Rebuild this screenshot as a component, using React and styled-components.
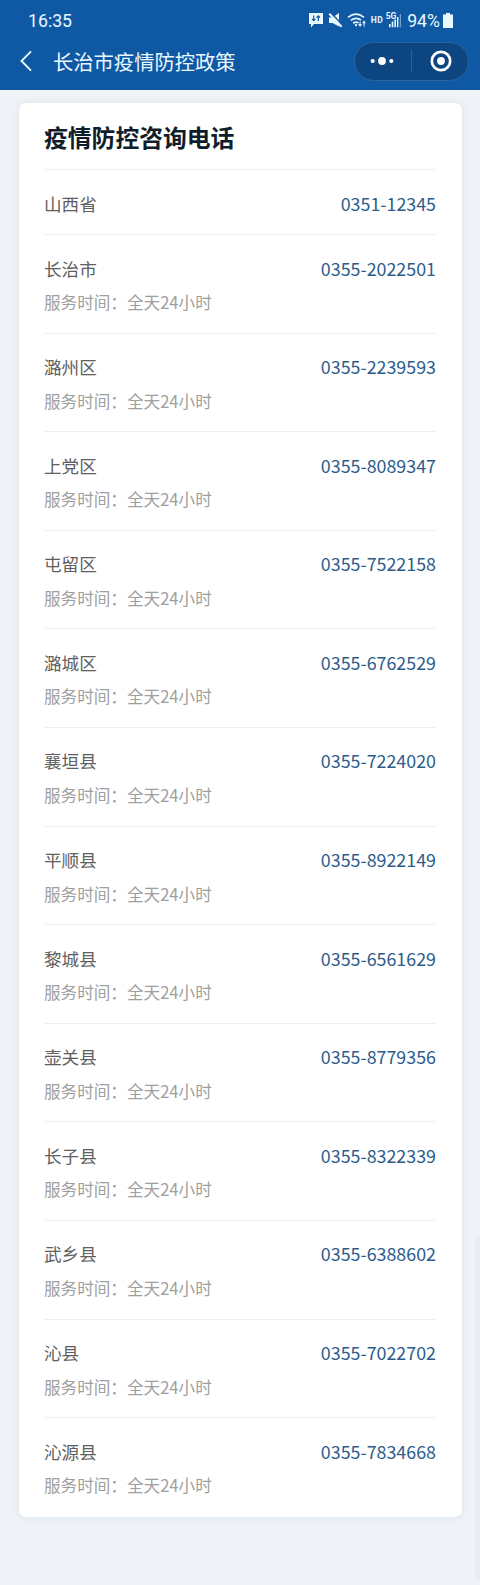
import styled, { createGlobalStyle } from "styled-components";


const GlobalStyle = createGlobalStyle`
  * {
    box-sizing: border-box;
  }

  body {
    margin: 0;
    background-color: #eff3f8;
    font-family: "Noto Sans CJK SC", sans-serif;
  }
`;

const StyledPage = styled.div`
  position: relative;
  width: 480px;
  min-height: 1585px;
  background-color: #eff3f8;
`;

const StyledHeader = styled.header`
  height: 89.5px;
  background-color: #0f59a4;
  color: #e9f8ff;
`;

const StyledStatusBar = styled.div`
  display: flex;
  align-items: center;
  justify-content: space-between;
  height: 39px;
  padding: 2px 27px 0 28px;
  font-family: Roboto, sans-serif;
  font-size: 17.7px;
  line-height: 20px;
`;

const StyledStatusIcons = styled.div`
  display: flex;
  align-items: center;

  svg {
    display: block;
  }
`;

const StyledPercent = styled.span`
  margin-left: 5px;
  margin-right: 3px;
`;

const StyledNavBar = styled.div`
  display: flex;
  align-items: center;
  height: 44px;
  padding-left: 20px;
  padding-right: 11px;
`;

const StyledTitle = styled.h1`
  flex: 1;
  margin: 0 0 0 21px;
  font-size: 20.3px;
  font-weight: 400;
  line-height: 30px;
`;

const StyledCapsule = styled.div`
  display: flex;
  align-items: center;
  width: 115px;
  height: 39px;
  border: 1px solid #2a659f;
  border-radius: 20px;
  background-color: #0d4581;
`;

const StyledCapsuleButton = styled.button`
  display: flex;
  flex: 1;
  align-items: center;
  justify-content: center;
  height: 23px;
  padding: ${({ $divided }) => ($divided ? "0 0 0 3px" : "0 2px 0 0")};
  border: 0;
  border-left: ${({ $divided }) => ($divided ? "1px solid #2c5f93" : "0")};
  background: none;
`;

const StyledCard = styled.main`
  width: 443px;
  height: 1414px;
  margin: 13.5px 0 0 18.5px;
  padding: 0 25.5px;
  border-radius: 7px;
  background-color: #fff;
  box-shadow: 0 0 6px rgba(60, 70, 80, 0.1);
`;

const StyledCardTitle = styled.h2`
  height: 66px;
  margin: 0;
  color: #101d2b;
  font-size: 23.8px;
  font-weight: 700;
  line-height: 68px;
`;

const StyledRow = styled.section`
  height: ${({ $short }) => ($short ? "65px" : "98.6px")};
  padding-top: 18.5px;
  border-top: 1px solid #efefef;
`;

const StyledContact = styled.div`
  display: flex;
  justify-content: space-between;
  font-size: 17.6px;
  line-height: 29px;
`;

const StyledName = styled.span`
  color: #606060;
`;

const StyledPhone = styled.span`
  color: #2d5c8a;
  font-size: 17.85px;
`;

const StyledHours = styled.div`
  margin-top: 6.5px;
  color: #9f9f9f;
  font-size: 16.6px;
  line-height: 26px;
`;

const StyledScrollThumb = styled.div`
  position: absolute;
  top: 1235px;
  right: 0;
  width: 5px;
  height: 346px;
  background-color: #e9edf1;
`;


const contacts = [
  { name: "山西省", phone: "0351-12345" },
  { name: "长治市", phone: "0355-2022501", hours: "全天24小时" },
  { name: "潞州区", phone: "0355-2239593", hours: "全天24小时" },
  { name: "上党区", phone: "0355-8089347", hours: "全天24小时" },
  { name: "屯留区", phone: "0355-7522158", hours: "全天24小时" },
  { name: "潞城区", phone: "0355-6762529", hours: "全天24小时" },
  { name: "襄垣县", phone: "0355-7224020", hours: "全天24小时" },
  { name: "平顺县", phone: "0355-8922149", hours: "全天24小时" },
  { name: "黎城县", phone: "0355-6561629", hours: "全天24小时" },
  { name: "壶关县", phone: "0355-8779356", hours: "全天24小时" },
  { name: "长子县", phone: "0355-8322339", hours: "全天24小时" },
  { name: "武乡县", phone: "0355-6388602", hours: "全天24小时" },
  { name: "沁县", phone: "0355-7022702", hours: "全天24小时" },
  { name: "沁源县", phone: "0355-7834668", hours: "全天24小时" },
];

const StatusIcons = () => (
  <svg width="94" height="20" viewBox="0 0 94 20" fill="#e9f8ff">
    {/* message with arrows */}
    <path d="M1 2h14v11H6l-3 3.5V13H1z" />
    <path d="M5.7 4.5v5M4 7.8l1.7 1.9 1.7-1.9M10.3 10V5M8.6 6.7l1.7-1.9L12 6.7" fill="none" stroke="#0f59a4" strokeWidth="1.2" />
    {/* muted speaker */}
    <path d="M21 6.5h3.5L31 2v13.5L24.5 12H21z" />
    <path d="M22.8 1.8l12.4 13" stroke="#0f59a4" strokeWidth="1.6" />
    <path d="M21.3 2.8l12.3 13" stroke="#e9f8ff" strokeWidth="2" />
    {/* wifi */}
    <g fill="none" stroke="#e9f8ff" strokeWidth="1.7">
      <path d="M40 6.3Q48 0 56 6.3" />
      <path d="M42.8 9.4Q48 5.4 53 9" />
      <path d="M45.2 12.3Q48 10.2 50.4 12" />
    </g>
    <circle cx="48" cy="14.1" r="1.2" />
    <path d="M50.2 13h1.4v-2.5h1V13H54l-1.9 3zM54.2 12.2l1.8-3 1.8 3h-1.3v3.4h-1v-3.4z" />
    <text x="62.7" y="12.2" fontFamily="Roboto, sans-serif" fontSize="8.5" fontWeight="700" textLength="12">HD</text>
    <text x="77.7" y="8.3" fontFamily="Roboto, sans-serif" fontSize="8.5" fontWeight="700">5G</text>
    {/* signal bars */}
    <path d="M81 13h1.6v3.2H81zM83.7 10.5h1.6v5.7h-1.6zM86.4 8.5H88v7.7h-1.6zM89 6h1.4v10.2H89z" />
    <path d="M91.8 3h1.2v13.2h-1.2z" opacity=".45" />
  </svg>
);

const BatteryIcon = () => (
  <svg width="10" height="15" viewBox="0 0 10 15" fill="#e9f8ff">
    <path d="M3 0h4v1.5h3V15H0V1.5h3z" />
  </svg>
);

const App = () => {
  return (
    <>
      <GlobalStyle />
      <StyledPage>
        <StyledHeader>
          <StyledStatusBar>
            <span>16:35</span>
            <StyledStatusIcons>
              <StatusIcons />
              <StyledPercent>94%</StyledPercent>
              <BatteryIcon />
            </StyledStatusIcons>
          </StyledStatusBar>
          <StyledNavBar>
            <svg width="12" height="22" viewBox="0 0 12 22" fill="none" stroke="#e9f8ff" strokeWidth="1.9">
              <path d="M11 1.3L1.5 11 11 20.7" />
            </svg>
            <StyledTitle>长治市疫情防控政策</StyledTitle>
            <StyledCapsule>
              <StyledCapsuleButton>
                <svg width="24" height="8" viewBox="0 0 24 8" fill="#fff">
                  <circle cx="2.7" cy="4" r="2.1" />
                  <circle cx="12" cy="4" r="3.9" />
                  <circle cx="21.3" cy="4" r="2.1" />
                </svg>
              </StyledCapsuleButton>
              <StyledCapsuleButton $divided>
                <svg width="22" height="22" viewBox="0 0 22 22">
                  <circle cx="11" cy="11" r="9.2" fill="none" stroke="#fff" strokeWidth="2.7" />
                  <circle cx="11" cy="11" r="3.9" fill="#fff" />
                </svg>
              </StyledCapsuleButton>
            </StyledCapsule>
          </StyledNavBar>
        </StyledHeader>
        <StyledCard>
          <StyledCardTitle>疫情防控咨询电话</StyledCardTitle>
          {contacts.map(({ name, phone, hours }) => (
            <StyledRow key={name} $short={!hours}>
              <StyledContact>
                <StyledName>{name}</StyledName>
                <StyledPhone>{phone}</StyledPhone>
              </StyledContact>
              {hours && <StyledHours>服务时间：{hours}</StyledHours>}
            </StyledRow>
          ))}
        </StyledCard>
        <StyledScrollThumb />
      </StyledPage>
    </>
  );
};

export default App;
